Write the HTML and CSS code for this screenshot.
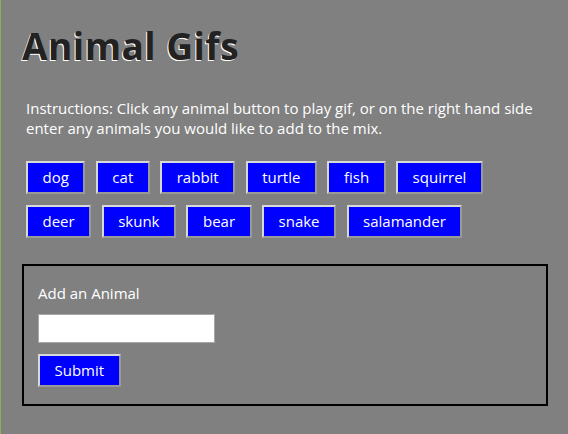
FILE: index.html
```html
<!DOCTYPE html>
<html>
<head>
<meta charset="utf-8">
<link rel="stylesheet" href="styles.css">
</head>
<body>
<div class="page">
  <h1 class="title">Animal Gifs</h1>
  <p class="instructions">Instructions: Click any animal button to play gif, or on the right hand side enter any animals you would like to add to the mix.</p>
  <div class="buttons">
    <button class="animal">dog</button>
    <button class="animal">cat</button>
    <button class="animal">rabbit</button>
    <button class="animal">turtle</button>
    <button class="animal">fish</button>
    <button class="animal">squirrel</button>
    <button class="animal">deer</button>
    <button class="animal">skunk</button>
    <button class="animal">bear</button>
    <button class="animal">snake</button>
    <button class="animal">salamander</button>
  </div>
  <form class="add-box">
    <label class="add-label" for="animal-input">Add an Animal</label>
    <input class="add-input" id="animal-input" type="text">
    <button class="animal submit" type="button">Submit</button>
  </form>
</div>
</body>
</html>
```

FILE: styles.css
```css
html, body {
  margin: 0;
  padding: 0;
  height: 100%;
}
body {
  background: #808080;
  border-left: 1px solid #8aae52;
  box-sizing: border-box;
  font-family: "Open Sans", "Noto Sans", sans-serif;
  color: #fff;
}
.page {
  padding: 22px 20px 0 21px;
  width: 526px;
}
.title {
  margin: 0;
  font-size: 37px;
  line-height: 48px;
  font-weight: 700;
  letter-spacing: 0.5px;
  color: #222;
  text-shadow: -1px 1px 0 #fff;
}
.instructions {
  margin: 28px 0 0 4px;
  font-size: 15px;
  line-height: 20px;
}
.buttons {
  display: flex;
  flex-wrap: wrap;
  gap: 11px 10.5px;
  margin: 23px 0 0 4px;
}
.animal {
  font-family: inherit;
  font-size: 15px;
  line-height: 19px;
  color: #fff;
  background: #0000ff;
  padding: 5px 14.5px;
  border: 2px solid;
  border-color: #d8d8d8 #999 #999 #d8d8d8;
  margin: 0;
}
.add-box {
  margin-top: 26px;
  border: 2px solid #000;
  padding: 17px 14px 17px 14px;
  display: flex;
  flex-direction: column;
  align-items: flex-start;
}
.add-label {
  font-size: 15px;
  line-height: 20px;
}
.add-input {
  margin-top: 11px;
  width: 177px;
  height: 29px;
  box-sizing: border-box;
  border: 1px solid #a8a8a8;
  background: #fff;
  padding: 0 4px;
}
.submit {
  margin-top: 11px;
}
```
